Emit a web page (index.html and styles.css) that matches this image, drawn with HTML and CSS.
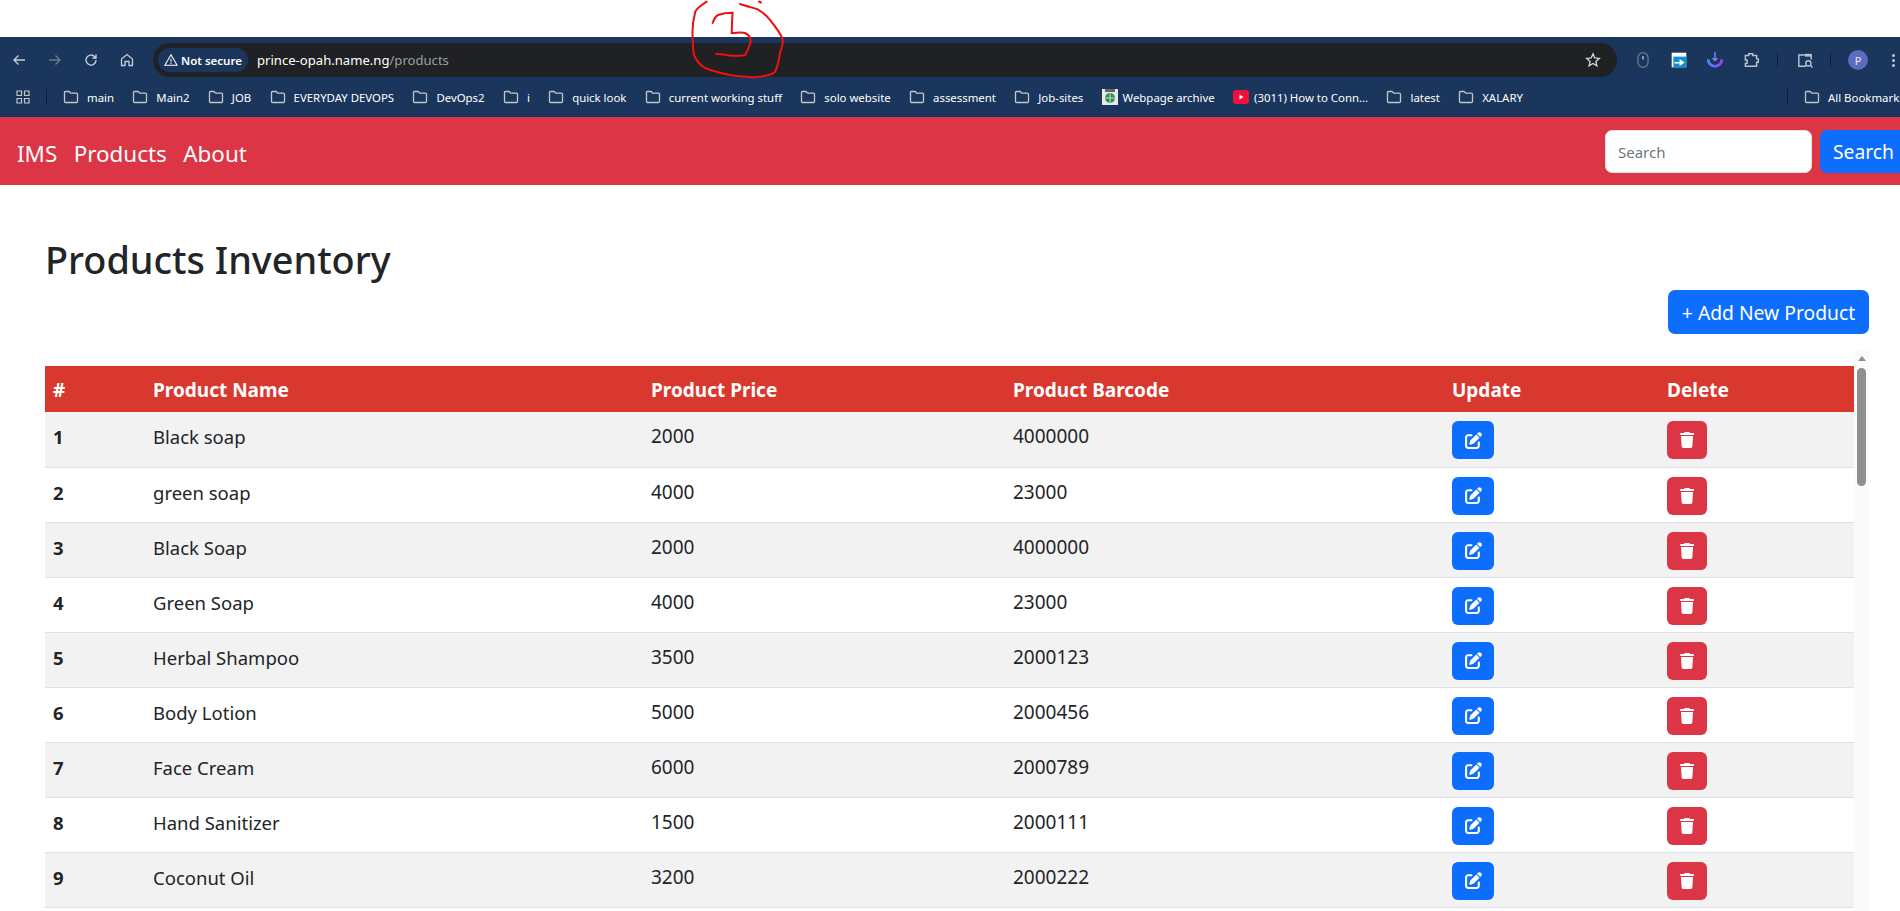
FILE: index.html
```html
<!DOCTYPE html>
<html lang="en">
<head>
<meta charset="utf-8">
<title>Products Inventory</title>
<link rel="stylesheet" href="styles.css">
</head>
<body>
<svg width="0" height="0" class="defs">
  <defs>
    <linearGradient id="arc" x1="0" y1="0" x2="1" y2="0"><stop offset="0" stop-color="#3f8cf5"/><stop offset="1" stop-color="#a63df0"/></linearGradient>
  </defs>
  <symbol id="folder" viewBox="0 0 16 16"><path d="M1.5 3.5a1 1 0 0 1 1-1h3.6l1.6 1.7h5.8a1 1 0 0 1 1 1v7.300a1 1 0 0 1-1 1h-11a1 1 0 0 1-1-1z" fill="none" stroke="#c4c7c5" stroke-width="1.3"/></symbol>
  <symbol id="edit" viewBox="0 0 512 512"><path fill="#fff" d="M471.600 21.700c-21.900-21.900-57.300-21.900-79.200 0L362.300 51.700l97.900 97.900 30.100-30.100c21.900-21.900 21.900-57.300 0-79.200L471.600 21.700zm-299.200 220c-6.100 6.100-10.800 13.600-13.500 21.900l-29.600 88.800c-2.900 8.600-.6 18.100 5.800 24.600s15.900 8.700 24.600 5.800l88.800-29.600c8.200-2.700 15.700-7.400 21.900-13.500L437.700 172.300 339.700 74.300 172.400 241.700zM96 64C43 64 0 107 0 160V416c0 53 43 96 96 96H352c53 0 96-43 96-96V320c0-17.700-14.300-32-32-32s-32 14.300-32 32v96c0 17.700-14.300 32-32 32H96c-17.700 0-32-14.300-32-32V160c0-17.700 14.300-32 32-32h96c17.700 0 32-14.300 32-32s-14.300-32-32-32H96z"/></symbol>
  <symbol id="trash" viewBox="0 0 448 512"><path fill="#fff" d="M135.200 17.700L128 32H32C14.300 32 0 46.300 0 64S14.300 96 32 96H416c17.700 0 32-14.300 32-32s-14.300-32-32-32H320l-7.200-14.300C307.400 6.800 296.300 0 284.200 0H163.800c-12.100 0-23.200 6.800-28.600 17.700zM416 128H32L53.200 467c1.600 25.300 22.600 45 47.900 45H346.900c25.300 0 46.300-19.700 47.900-45L416 128z"/></symbol>
</svg>

<div class="top-strip"></div>

<header class="browser">
  <div class="toolbar">
    <div class="nav-icons">
      <svg class="tb-icon" viewBox="0 0 16 16"><path d="M14 8H3M7.5 3.5 3 8l4.5 4.5" fill="none" stroke="#c7cdd6" stroke-width="1.4"/></svg>
      <svg class="tb-icon" viewBox="0 0 16 16"><path d="M2 8h11M8.5 3.5 13 8l-4.500 4.500" fill="none" stroke="#6b7a90" stroke-width="1.4"/></svg>
      <svg class="tb-icon" viewBox="0 0 16 16"><path d="M13 8a5 5 0 1 1-1.500-3.500L13 6M13 2.500V6H9.500" fill="none" stroke="#c7cdd6" stroke-width="1.400"/></svg>
      <svg class="tb-icon" viewBox="0 0 16 16"><path d="M2.500 7 8 2.500 13.500 7v6.500h-3.500V9.500H6v4H2.500z" fill="none" stroke="#c7cdd6" stroke-width="1.300"/></svg>
    </div>
    <div class="omnibox">
      <span class="chip">
        <svg class="chip-icon" viewBox="0 0 16 16"><path d="M8 2 15 14H1zM8 6.500v4M8 11.500v1" fill="none" stroke="#fff" stroke-width="1.200"/></svg>
        Not secure
      </span>
      <span class="url">prince-opah.name.ng<span class="url-path">/products</span></span>
      <svg class="star" viewBox="0 0 16 16"><path d="M8 1.800 9.800 6l4.500.4-3.400 3 1 4.400L8 11.500l-3.900 2.300 1-4.400-3.400-3L6.200 6z" fill="none" stroke="#d5d7da" stroke-width="1.300"/></svg>
    </div>
    <div class="ext-icons">
      <svg class="ext" viewBox="0 0 16 16"><rect x="3.500" y="1.500" width="9" height="13" rx="4.500" fill="none" stroke="#5f7d86" stroke-width="1.200"/><path d="M8 4.500v3" stroke="#9fb2b8" stroke-width="1.400"/></svg>
      <svg class="ext" viewBox="0 0 16 16"><rect x="1.500" y="1.500" width="13" height="13" fill="#fff"/><rect x="3" y="5" width="11.500" height="9.500" fill="#0d8fd6"/><path d="M4 9.700h4.500V7L13 10.200 8.500 13.300v-2.200H4z" fill="#fff"/></svg>
      <svg class="ext" viewBox="0 0 16 16"><path d="M2 7.500a6 6 0 0 0 12 0" fill="none" stroke="url(#arc)" stroke-width="2.600"/><path d="M8 1v7.500M5.700 6.200 8 8.500l2.300-2.300" fill="none" stroke="#7b7cf5" stroke-width="1.400"/></svg>
      <svg class="ext" viewBox="0 0 16 16"><path d="M6 2.500h3.500v1.500h3.500v3h1.500v3H13v3.500H3V11h1.500V8H3V4h3z" fill="none" stroke="#b7c3d2" stroke-width="1.300"/></svg>
      <span class="tb-sep"></span>
      <svg class="ext ext-tab" viewBox="0 0 16 16"><path d="M9 13.500H2.500v-10h11v4" fill="none" stroke="#b7c3d2" stroke-width="1.300"/><rect x="8" y="2.500" width="5.500" height="2.500" fill="#b7c3d2"/><circle cx="11" cy="11" r="2.300" fill="none" stroke="#b7c3d2" stroke-width="1.200"/><path d="m12.700 12.700 2 2" stroke="#b7c3d2" stroke-width="1.200"/></svg>
      <span class="tb-sep"></span>
      <span class="avatar">P</span>
      <span class="dots"><i></i><i></i><i></i></span>
    </div>
  </div>

  <nav class="bookmarks">
    <svg class="apps" viewBox="0 0 16 16"><path d="M2 2h4.500v4.500H2zM9.500 2H14v4.500H9.500zM2 9.500h4.500V14H2zM9.500 9.500H14V14H9.500z" fill="none" stroke="#c4c7c5" stroke-width="1.200"/></svg>
    <span class="bm-sep"></span>
    <div class="bm-list">
      <a class="bm"><svg class="bm-icon"><use href="#folder"/></svg>main</a>
      <a class="bm"><svg class="bm-icon"><use href="#folder"/></svg>Main2</a>
      <a class="bm"><svg class="bm-icon"><use href="#folder"/></svg>JOB</a>
      <a class="bm"><svg class="bm-icon"><use href="#folder"/></svg>EVERYDAY DEVOPS</a>
      <a class="bm"><svg class="bm-icon"><use href="#folder"/></svg>DevOps2</a>
      <a class="bm"><svg class="bm-icon"><use href="#folder"/></svg>i</a>
      <a class="bm"><svg class="bm-icon"><use href="#folder"/></svg>quick look</a>
      <a class="bm"><svg class="bm-icon"><use href="#folder"/></svg>current working stuff</a>
      <a class="bm"><svg class="bm-icon"><use href="#folder"/></svg>solo website</a>
      <a class="bm"><svg class="bm-icon"><use href="#folder"/></svg>assessment</a>
      <a class="bm"><svg class="bm-icon"><use href="#folder"/></svg>Job-sites</a>
      <a class="bm bm-fav"><svg class="bm-icon" viewBox="0 0 16 16"><rect width="16" height="16" fill="#e8e8e8"/><rect x="3" y="0" width="10" height="3" fill="#666"/><circle cx="8" cy="9" r="5" fill="#2f8f4e"/><path d="M3 9h10M8 4v10" stroke="#bfe3c9" stroke-width="1"/></svg>Webpage archive</a>
      <a class="bm bm-fav"><svg class="bm-icon" viewBox="0 0 16 16"><rect y="1" width="16" height="14" rx="3" fill="#f0103c"/><path d="M6.500 5.500 10.500 8l-4 2.500z" fill="#fff"/></svg>(3011) How to Conn...</a>
      <a class="bm"><svg class="bm-icon"><use href="#folder"/></svg>latest</a>
      <a class="bm"><svg class="bm-icon"><use href="#folder"/></svg>XALARY</a>
    </div>
    <span class="bm-sep bm-sep-end"></span>
    <a class="bm bm-all"><svg class="bm-icon"><use href="#folder"/></svg>All Bookmarks</a>
  </nav>
</header>

<nav class="site-nav">
  <a class="site-link">IMS</a>
  <a class="site-link">Products</a>
  <a class="site-link">About</a>
  <form class="search">
    <input class="search-input" placeholder="Search">
    <button type="button" class="btn btn-blue search-btn">Search</button>
  </form>
</nav>

<main class="content">
  <h1 class="title">Products Inventory</h1>
  <div class="actions"><button type="button" class="btn btn-blue add-btn">+ Add New Product</button></div>
  <div class="table-area">
    <div class="table-wrap">
      <table class="products">
        <colgroup>
          <col class="c-id"><col class="c-name"><col class="c-price"><col class="c-code"><col class="c-upd"><col class="c-del">
        </colgroup>
        <thead>
          <tr><th>#</th><th>Product Name</th><th>Product Price</th><th>Product Barcode</th><th>Update</th><th>Delete</th></tr>
        </thead>
        <tbody>
          <tr><th>1</th><td>Black soap</td><td class="num">2000</td><td class="num">4000000</td><td><span class="act act-edit"><svg class="i-edit"><use href="#edit"/></svg></span></td><td><span class="act act-del"><svg class="i-trash"><use href="#trash"/></svg></span></td></tr>
          <tr><th>2</th><td>green soap</td><td class="num">4000</td><td class="num">23000</td><td><span class="act act-edit"><svg class="i-edit"><use href="#edit"/></svg></span></td><td><span class="act act-del"><svg class="i-trash"><use href="#trash"/></svg></span></td></tr>
          <tr><th>3</th><td>Black Soap</td><td class="num">2000</td><td class="num">4000000</td><td><span class="act act-edit"><svg class="i-edit"><use href="#edit"/></svg></span></td><td><span class="act act-del"><svg class="i-trash"><use href="#trash"/></svg></span></td></tr>
          <tr><th>4</th><td>Green Soap</td><td class="num">4000</td><td class="num">23000</td><td><span class="act act-edit"><svg class="i-edit"><use href="#edit"/></svg></span></td><td><span class="act act-del"><svg class="i-trash"><use href="#trash"/></svg></span></td></tr>
          <tr><th>5</th><td>Herbal Shampoo</td><td class="num">3500</td><td class="num">2000123</td><td><span class="act act-edit"><svg class="i-edit"><use href="#edit"/></svg></span></td><td><span class="act act-del"><svg class="i-trash"><use href="#trash"/></svg></span></td></tr>
          <tr><th>6</th><td>Body Lotion</td><td class="num">5000</td><td class="num">2000456</td><td><span class="act act-edit"><svg class="i-edit"><use href="#edit"/></svg></span></td><td><span class="act act-del"><svg class="i-trash"><use href="#trash"/></svg></span></td></tr>
          <tr><th>7</th><td>Face Cream</td><td class="num">6000</td><td class="num">2000789</td><td><span class="act act-edit"><svg class="i-edit"><use href="#edit"/></svg></span></td><td><span class="act act-del"><svg class="i-trash"><use href="#trash"/></svg></span></td></tr>
          <tr><th>8</th><td>Hand Sanitizer</td><td class="num">1500</td><td class="num">2000111</td><td><span class="act act-edit"><svg class="i-edit"><use href="#edit"/></svg></span></td><td><span class="act act-del"><svg class="i-trash"><use href="#trash"/></svg></span></td></tr>
          <tr><th>9</th><td>Coconut Oil</td><td class="num">3200</td><td class="num">2000222</td><td><span class="act act-edit"><svg class="i-edit"><use href="#edit"/></svg></span></td><td><span class="act act-del"><svg class="i-trash"><use href="#trash"/></svg></span></td></tr>
        </tbody>
      </table>
    </div>
    <div class="scrollbar"><span class="sb-arrow"></span><span class="sb-thumb"></span></div>
  </div>
</main>

<svg class="scribble" viewBox="0 0 120 80" width="120" height="80">
  <path d="M26.700 1.700C20 6 15 10 15 13C12.700 22 12 30 12.700 38C13 46 13 50 14 55C17 62 20 65 25 68C35 72 40 73 50 75C60 76.500 70 77.500 77 77C87 76 92 75 95 72C98 66 99 60 100 53C102 47 103 43 103 40C100 32 95 26 90 20C86 14 82 12 77 9C72 7.500 66 6 60 4" fill="none" stroke="#f01010" stroke-width="2" stroke-linecap="round"/>
  <path d="M32.700 23C34 19 36 16 38 15C42 13.500 48 12.700 52.700 12.700C52 18 52 26 51.700 33C56 33 62 32 65 33C69 35 71 38 70.700 41.700C69 47 67 52 65 55C60 56 52 56 46 55C44 54.500 40 54 36 54" fill="none" stroke="#f01010" stroke-width="2" stroke-linecap="round"/>
  <path d="M79 1.500 81 2.500" fill="none" stroke="#f01010" stroke-width="2" stroke-linecap="round"/>
</svg>
</body>
</html>
```

FILE: styles.css
```css
* { box-sizing: border-box; }
html, body { margin: 0; height: 911px; overflow: hidden; background: #fff; }
body { font-family: "Noto Sans", "Open Sans", sans-serif; color: #212529; position: relative; }
.defs { position: absolute; }

.top-strip { height: 37px; background: #fff; }

.browser { height: 80px; background: #1b365d; color: #fff; display: flex; flex-direction: column; }
.toolbar { height: 46px; display: flex; align-items: center; }
.nav-icons { width: 153px; flex: none; display: flex; align-items: center; gap: 20px; padding-left: 11px; }
.tb-icon { width: 16px; height: 16px; flex: none; }
.omnibox { width: 1464px; height: 34px; flex: none; border-radius: 17px; background: #202124; display: flex; align-items: center; padding: 0 16px 0 5px; }
.chip { height: 24px; width: 90px; flex: none; border-radius: 12px; background: #1b365d; font-size: 11.5px; font-weight: 600; display: flex; align-items: center; justify-content: center; gap: 3px; white-space: nowrap; }
.chip-icon { width: 14px; height: 14px; flex: none; }
.url { margin-left: 9px; font-size: 13.1px; color: #fff; flex: 1; white-space: nowrap; }
.url-path { color: #9aa0a6; }
.star { width: 16px; height: 16px; flex: none; }
.ext-icons { flex: 1; display: flex; align-items: center; padding-left: 17px; min-width: 0; }
.ext { width: 18px; height: 18px; flex: none; margin-right: 18px; }
.ext-tab { margin-right: 16px; }
.tb-sep { width: 1px; height: 16px; flex: none; background: #0d1f38; margin-right: 18px; margin-left: -1px; }
.ext-tab + .tb-sep { margin-left: 0; margin-right: 17px; }
.avatar { width: 20px; height: 20px; flex: none; border-radius: 50%; background: #5c6bc0; color: #e8eaf6; font-size: 11px; display: flex; align-items: center; justify-content: center; }
.dots { display: flex; flex-direction: column; gap: 2px; margin-left: 24px; flex: none; }
.dots i { width: 3px; height: 3px; border-radius: 50%; background: #c4c7c5; display: block; }

.bookmarks { height: 34px; display: flex; align-items: center; padding: 0 0 6px 15px; font-size: 11.4px; white-space: nowrap; overflow: hidden; }
.apps { width: 16px; height: 16px; flex: none; }
.bm-sep { width: 1px; height: 16px; flex: none; background: #0d1f38; margin-left: 15px; }
.bm-list { display: flex; align-items: center; gap: 18.3px; margin-left: 16px; width: 1724px; flex: none; }
.bm { display: flex; align-items: center; gap: 8px; color: #fff; }
.bm-fav { gap: 5px; }
.bm-icon { width: 16px; height: 16px; flex: none; }
.bm-sep-end { margin-left: 0; }
.bm-all { margin-left: 16px; }

.site-nav { height: 68px; background: #dc3545; display: flex; align-items: center; padding-left: 17px; gap: 16.5px; }
.site-link { color: #fff; font-size: 22.4px; padding-top: 5px; }
.search { margin-left: auto; display: flex; gap: 8px; flex: none; margin-right: -8px; }
.search-input { width: 207px; height: 43px; border: 1px solid #dee2e6; border-radius: 7px; padding: 1px 12px 0; font: 15px "Noto Sans", sans-serif; background: #fff; }
.search-input::placeholder { color: #6c757d; opacity: 1; }
.btn { border: 0; border-radius: 7px; color: #fff; font: 19.300px "Noto Sans", sans-serif; height: 44px; }
.btn-blue { background: #0d6efd; }
.search-btn { width: 88px; height: 43px; text-align: left; padding: 1px 0 0 13px; }

.content { padding: 51px 31px 0 45px; }
.title { margin: 0; font-size: 37.8px; font-weight: 500; line-height: 48px; }
.actions { display: flex; justify-content: flex-end; margin-top: 6px; margin-bottom: 16px; }
.add-btn { width: 201px; padding: 0; }

.table-area { display: flex; height: 561px; overflow: hidden; }
.table-wrap { width: 1809px; flex: none; padding-top: 16px; }
.products { width: 100%; border-collapse: collapse; table-layout: fixed; font-size: 18.5px; }
.c-id { width: 100px; }
.c-name { width: 498px; }
.c-price { width: 362px; }
.c-code { width: 439px; }
.c-upd { width: 215px; }
.c-del { width: 195px; }
.products thead th { background: #d9382f; color: #fff; text-align: left; height: 46px; padding: 2px 8px 0; font-weight: 700; font-size: 19px; }
.products tbody tr { height: 55px; }
.products tbody td, .products tbody th { padding: 9px 8px 7px; vertical-align: top; text-align: left; border-bottom: 1px solid #dee2e6; line-height: 31px; }
.products tbody td.num { font-size: 19px; }
.products tbody th { font-weight: 700; }
.products tbody tr:nth-child(odd) { background: #f2f2f2; }
.act { display: flex; align-items: center; justify-content: center; height: 38px; border-radius: 6px; }
.act-edit { width: 42px; background: #0d6efd; }
.act-del { width: 40px; background: #dc3545; }
.i-edit { width: 17px; height: 17px; }
.i-trash { width: 14px; height: 16px; }

.scrollbar { width: 15px; flex: none; background: #fafafa; display: flex; flex-direction: column; align-items: center; padding-top: 6px; }
.sb-arrow { width: 0; height: 0; border-left: 4.500px solid transparent; border-right: 4.500px solid transparent; border-bottom: 5px solid #8f8f8f; }
.sb-thumb { width: 9px; height: 118px; margin-top: 7px; border-radius: 5px; background: #8f8f8f; }

.scribble { position: absolute; left: 680px; top: 0; pointer-events: none; }
```
